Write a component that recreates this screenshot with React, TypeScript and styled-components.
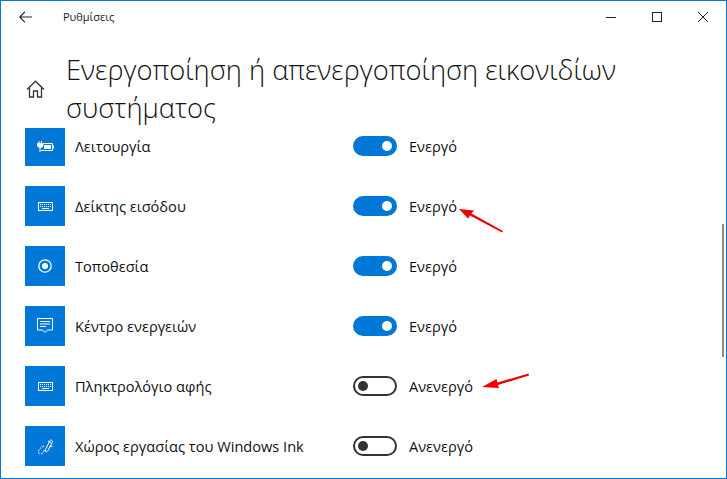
import { FC, ReactNode } from "react";
import styled, { createGlobalStyle } from "styled-components";

const GlobalStyle = createGlobalStyle`
  html, body {
    margin: 0;
    padding: 0;
    background: #fff;
  }
`;

const FONT = `"Open Sans", "Noto Sans", "Liberation Sans", sans-serif`;

const Frame = styled.div`
  position: relative;
  box-sizing: border-box;
  width: 727px;
  height: 479px;
  border: 1px solid #0078d7;
  background: #fff;
  overflow: hidden;
  font-family: ${FONT};
  color: #000;
  display: flex;
  flex-direction: column;
`;

const TitleBar = styled.div`
  display: flex;
  align-items: center;
  height: 31px;
  flex: none;
`;

const BackButton = styled.div`
  padding-left: 18px;
  box-sizing: border-box;
  width: 62px;
  display: flex;
  align-items: center;
`;

const AppName = styled.span`
  font-size: 11px;
  color: #222;
  flex: 1;
`;

const WindowButton = styled.div`
  width: 46px;
  height: 31px;
  display: flex;
  align-items: center;
  justify-content: center;
`;

const Header = styled.div`
  display: flex;
  flex: none;
  height: 96px;
  padding: 19px 0 0 24px;
  box-sizing: border-box;
`;

const HomeSlot = styled.div`
  width: 41px;
  flex: none;
  padding-top: 29px;
  padding-left: 1px;
  box-sizing: border-box;
`;

const PageTitle = styled.h1`
  margin: 0;
  font-size: 27.3px;
  font-weight: 300;
  line-height: 38px;
  width: 600px;
  color: #111;
`;

const List = styled.div`
  flex: 1;
  overflow: hidden;
  padding-left: 24px;
`;

const Rows = styled.div`
  margin-top: -2px;
  display: flex;
  flex-direction: column;
  gap: 20px;
`;

const Row = styled.div`
  display: flex;
  align-items: center;
  height: 40px;
`;

const Tile = styled.div`
  width: 40px;
  height: 40px;
  flex: none;
  background: #0078d7;
  display: flex;
  align-items: center;
  justify-content: center;
`;

const RowLabel = styled.span`
  width: 278px;
  margin-left: 10px;
  flex: none;
  font-size: 14.6px;
  color: #111;
`;

const Toggle = styled.div<{ $on: boolean }>`
  width: 44px;
  height: 20px;
  box-sizing: border-box;
  border-radius: 10px;
  flex: none;
  display: flex;
  align-items: center;
  justify-content: ${(p) => (p.$on ? "flex-end" : "flex-start")};
  padding: 0 ${(p) => (p.$on ? "5px" : "3px")};
  background: ${(p) => (p.$on ? "#0078d7" : "#fff")};
  border: ${(p) => (p.$on ? "none" : "2px solid #333")};
`;

const Knob = styled.div<{ $on: boolean }>`
  width: 10px;
  height: 10px;
  border-radius: 50%;
  background: ${(p) => (p.$on ? "#fff" : "#333")};
`;

const StateText = styled.span`
  margin-left: 12px;
  font-size: 14.6px;
  color: #111;
`;

const ScrollThumb = styled.div`
  position: absolute;
  left: 721px;
  top: 223px;
  width: 2px;
  height: 133px;
  background: #8a8a8a;
`;

const Annotation = styled.svg`
  position: absolute;
  left: -1px;
  top: -1px;
  pointer-events: none;
`;

const Glyph: FC<{ children: ReactNode; w?: number; h?: number }> = ({ children, w = 16, h = 16 }) => (
  <svg width={w} height={h} viewBox={`0 0 ${w} ${h}`} fill="none" stroke="#fff" strokeWidth="1">
    {children}
  </svg>
);

const BatteryIcon = () => (
  <Glyph w={17} h={11}>
    <path d="M2 0v2.500M4.500 0v2.500" />
    <path d="M.5 2.500h5.500v1.500a2.500 2.500 0 0 1-2.500 2.500h-.5a2.500 2.500 0 0 1-2.500-2.500z" fill="#fff" />
    <path d="M3 6v5" />
    <path d="M6 2.500h9.500v7H4" />
    <rect x="7" y="4" width="7" height="4" fill="#fff" stroke="none" />
    <rect x="15.500" y="4.500" width="1.500" height="3" fill="#fff" stroke="none" />
  </Glyph>
);

const KeyboardIcon = () => (
  <Glyph w={15} h={9}>
    <rect x=".5" y=".5" width="14" height="8" />
    <path d="M2 2.500h11M2 4.500h11" strokeDasharray="1 1" />
    <path d="M4 6.500h7" />
  </Glyph>
);

const LocationIcon = () => (
  <Glyph w={16} h={16}>
    <circle cx="8" cy="8" r="6.200" strokeWidth="1.300" />
    <circle cx="8" cy="8" r="3" fill="#fff" stroke="none" />
  </Glyph>
);

const ActionCenterIcon = () => (
  <Glyph w={16} h={16}>
    <path d="M.5 .5h15v11.500h-5l-2.500 2.500-2.500-2.500h-5z" />
    <path d="M3 3.500h10M3 6h10M3 8.500h6" />
  </Glyph>
);

const InkIcon = () => (
  <Glyph w={17} h={17}>
    <path d="M8.500 11.500L13 2.500a1.500 1.500 0 0 1 2.500 1.200L11 12.500c-.8 1.300-2 1.500-2.500 1L8.500 11.500z" />
    <path d="M11 3l3 1.500" />
    <path d="M7 8c-3 1-6 4-5.500 6.500.5 2 3.500 1.500 5-.5 1-1.300 1.500-3 0-2" strokeDasharray="2 1" />
    <path d="M12 9l3.500-1" />
  </Glyph>
);

const HomeIcon = () => (
  <svg width="19" height="18" viewBox="0 0 19 18" fill="none" stroke="#333" strokeWidth="1.300">
    <path d="M1 9.500L9.500 1.200 18 9.500" />
    <path d="M3.500 7.500v9.500h4v-6h4v6h4V7.500" />
  </svg>
);

const rows: { label: string; on: boolean; icon: ReactNode }[] = [
  { label: "Λειτουργία", on: true, icon: <BatteryIcon /> },
  { label: "Δείκτης εισόδου", on: true, icon: <KeyboardIcon /> },
  { label: "Τοποθεσία", on: true, icon: <LocationIcon /> },
  { label: "Κέντρο ενεργειών", on: true, icon: <ActionCenterIcon /> },
  { label: "Πληκτρολόγιο αφής", on: false, icon: <KeyboardIcon /> },
  { label: "Χώρος εργασίας του Windows Ink", on: false, icon: <InkIcon /> },
];

export default function App() {
  return (
    <Frame>
      <GlobalStyle />
      <TitleBar>
        <BackButton>
          <svg width="13" height="12" viewBox="0 0 13 12" fill="none" stroke="#222" strokeWidth="1.100">
            <path d="M13 6H1M6 .7L.8 6 6 11.300" />
          </svg>
        </BackButton>
        <AppName>Ρυθμίσεις</AppName>
        <WindowButton>
          <svg width="10" height="10" viewBox="0 0 10 10" stroke="#222" strokeWidth="1">
            <path d="M0 5.500h10" />
          </svg>
        </WindowButton>
        <WindowButton>
          <svg width="10" height="10" viewBox="0 0 10 10" fill="none" stroke="#222" strokeWidth="1">
            <rect x=".5" y=".5" width="9" height="9" />
          </svg>
        </WindowButton>
        <WindowButton>
          <svg width="10" height="10" viewBox="0 0 10 10" stroke="#222" strokeWidth="1">
            <path d="M0 0l10 10M10 0L0 10" />
          </svg>
        </WindowButton>
      </TitleBar>
      <Header>
        <HomeSlot>
          <HomeIcon />
        </HomeSlot>
        <PageTitle>Ενεργοποίηση ή απενεργοποίηση εικονιδίων συστήματος</PageTitle>
      </Header>
      <List>
        <Rows>
          {rows.map((row) => (
            <Row key={row.label}>
              <Tile>{row.icon}</Tile>
              <RowLabel>{row.label}</RowLabel>
              <Toggle $on={row.on}>
                <Knob $on={row.on} />
              </Toggle>
              <StateText>{row.on ? "Ενεργό" : "Ανενεργό"}</StateText>
            </Row>
          ))}
        </Rows>
      </List>
      <ScrollThumb />
      <Annotation width="727" height="479" viewBox="0 0 727 479">
        <path d="M459 209L474 210.500L471.500 213.500L503 231L502 232.500L470 215.500L468 218.500z" fill="#f00000" />
        <path d="M482 387L496.500 379L497.500 382.500L528.500 373.500L529 375.500L498 385L499 388z" fill="#f00000" />
      </Annotation>
    </Frame>
  );
}
